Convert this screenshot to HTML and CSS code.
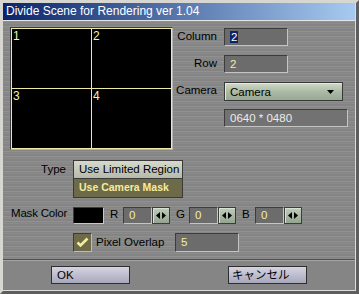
FILE: index.html
```html
<!DOCTYPE html>
<html lang="ja">
<head>
    <meta charset="UTF-8">
    <title>Divide Scene for Rendering</title>
    <link rel="stylesheet" href="styles.css">
</head>
<body>

<div class="window">
    <div class="window-inner">
        <div class="titlebar">Divide Scene for Rendering ver 1.04</div>

        <div class="panel">
            <div class="top">
                <div class="preview">
                    <div class="preview-grid">
                        <div class="cell">1</div>
                        <div class="cell">2</div>
                        <div class="cell">3</div>
                        <div class="cell">4</div>
                    </div>
                </div>

                <div class="fields">
                    <span class="label">Column</span>
                    <div class="field small"><span class="selected">2</span></div>

                    <span class="label">Row</span>
                    <div class="field small">2</div>

                    <span class="label">Camera</span>
                    <div class="dropdown">
                        <span>Camera</span>
                        <svg class="caret" width="7" height="4" viewBox="0 0 7 4"><polygon points="0,0 7,0 3.5,4" fill="#000"/></svg>
                    </div>

                    <div class="field info">0640 * 0480</div>
                </div>
            </div>

            <div class="row type-row">
                <span class="row-label">Type</span>
                <div class="choices">
                    <div class="choice">Use Limited Region</div>
                    <div class="choice active">Use Camera Mask</div>
                </div>
            </div>

            <div class="row mask-row">
                <span class="row-label left">Mask Color</span>
                <div class="swatch"></div>
                <div class="channel">
                    <span class="channel-name">R</span>
                    <div class="field tiny">0</div>
                    <div class="spin"><svg width="10" height="7" viewBox="0 0 10 7"><polygon points="4,0 4,7 0,3.5"/><polygon points="6,0 6,7 10,3.5"/></svg></div>
                </div>
                <div class="channel">
                    <span class="channel-name">G</span>
                    <div class="field tiny">0</div>
                    <div class="spin"><svg width="10" height="7" viewBox="0 0 10 7"><polygon points="4,0 4,7 0,3.5"/><polygon points="6,0 6,7 10,3.5"/></svg></div>
                </div>
                <div class="channel">
                    <span class="channel-name">B</span>
                    <div class="field tiny">0</div>
                    <div class="spin"><svg width="10" height="7" viewBox="0 0 10 7"><polygon points="4,0 4,7 0,3.5"/><polygon points="6,0 6,7 10,3.5"/></svg></div>
                </div>
            </div>

            <div class="row overlap-row">
                <div class="checkbox">
                    <svg width="13" height="11" viewBox="0 0 13 11"><polyline points="1.5,5.5 4.5,8.5 11.5,1.5" fill="none" stroke="#f4eca0" stroke-width="2.6"/></svg>
                </div>
                <span class="check-label">Pixel Overlap</span>
                <div class="field small">5</div>
            </div>
        </div>

        <div class="footer">
            <div class="button">OK</div>
            <div class="button cancel">キャンセル</div>
        </div>
    </div>
</div>

</body>
</html>
```

FILE: styles.css
```css
body {
    margin: 0;
    background: #d4d0c8;
    font-family: "Liberation Sans", "Noto Sans CJK JP", sans-serif;
    font-size: 11.5px;
    color: #000;
}

.window {
    width: 359px;
    height: 294px;
    box-sizing: border-box;
    border-top: 3px solid #d8d6d0;
    border-left: 3px solid #d8d6d0;
    border-right: 3px solid #5e5e5e;
    border-bottom: 3px solid #5e5e5e;
}

.window-inner {
    height: 100%;
    box-sizing: border-box;
    border-right: 1px solid #dcdcdc;
    border-bottom: 1px solid #dcdcdc;
    display: flex;
    flex-direction: column;
}

.titlebar {
    height: 17px;
    line-height: 17px;
    padding-left: 3px;
    font-size: 12px;
    color: #fff;
    background: linear-gradient(to right, #0a246a, #a6caf0);
    border-bottom: 1px solid #e4e4e4;
    white-space: nowrap;
}

.panel {
    height: 238px;
    box-sizing: border-box;
    padding: 6px 0 0 7px;
    background:
        repeating-linear-gradient(to bottom,
            rgba(255, 255, 255, 0.05) 0 1px,
            rgba(0, 0, 0, 0.04) 1px 2px,
            rgba(255, 255, 255, 0) 2px 3px,
            rgba(0, 0, 0, 0.05) 3px 5px),
        #8b8b8b;
    display: flex;
    flex-direction: column;
}

.top {
    display: flex;
    height: 123px;
}

/* preview of the split */

.preview {
    border: 1px solid;
    border-color: #3a3a3a #b4b4b4 #b4b4b4 #3a3a3a;
}

.preview-grid {
    display: grid;
    grid-template-columns: 79px 79px;
    grid-template-rows: 59px 59px;
    gap: 1px;
    padding: 1px;
    background: #eeeaa4;
}

.cell {
    background: #000;
    color: #f4f0b8;
    font-size: 12px;
    line-height: 12px;
    padding: 1px 0 0 1px;
}

/* right hand fields */

.fields {
    display: grid;
    grid-template-columns: 44px 124px;
    grid-auto-rows: 18px;
    column-gap: 7px;
    row-gap: 9px;
    margin-top: 1px;
    align-content: start;
}

.label {
    text-align: right;
    line-height: 17px;
    white-space: nowrap;
}

.field {
    box-sizing: border-box;
    height: 18px;
    line-height: 16px;
    padding-left: 5px;
    background: #6c6c6c;
    color: #f4eca0;
    border: 1px solid;
    border-color: #3c3c3c #c4c4c4 #c4c4c4 #3c3c3c;
}

.field.small {
    width: 64px;
}

.field.tiny {
    width: 29px;
}

.field.info {
    grid-column: 2;
    width: 124px;
    color: #ecece8;
    background: #727272;
}

.selected {
    background: #0a246a;
    color: #fff;
    padding: 0 1px;
}

.dropdown {
    box-sizing: border-box;
    width: 119px;
    height: 19px;
    padding: 0 8px 0 5px;
    border: 1px solid #383838;
    background: linear-gradient(to bottom, #d0dac8, #a8b8a2 55%, #98a894);
    box-shadow: inset 1px 1px 0 #e4ece0;
    display: flex;
    align-items: center;
    justify-content: space-between;
}

/* lower rows */

.row {
    display: flex;
    align-items: center;
}

.row-label {
    width: 56px;
    margin-right: 7px;
    text-align: right;
    white-space: nowrap;
}

.row-label.left {
    text-align: left;
    padding-left: 1px;
    box-sizing: border-box;
    align-self: flex-start;
    line-height: 12px;
    letter-spacing: -0.2px;
}

.type-row {
    margin-top: 10px;
    height: 38px;
    align-items: flex-start;
}

.type-row .row-label {
    line-height: 17px;
    margin-top: 1px;
}

.choices {
    display: flex;
    flex-direction: column;
    width: 110px;
}

.choice {
    box-sizing: border-box;
    height: 19px;
    line-height: 17px;
    padding-left: 5px;
    border: 1px solid #3a3a3a;
    background: linear-gradient(to bottom, #d6dacc, #b6baaa);
    white-space: nowrap;
}

.choice.active {
    border-top: 0;
    background: #6d6a49;
    color: #f4eca0;
    font-size: 10.5px;
    font-weight: bold;
}

.mask-row {
    margin-top: 9px;
    height: 17px;
    align-items: stretch;
}

.swatch {
    width: 31px;
    box-sizing: border-box;
    background: #000;
    border: 1px solid;
    border-color: #3c3c3c #c8c8c8 #c8c8c8 #3c3c3c;
    margin-right: 5px;
}

.channel {
    display: flex;
    align-items: stretch;
    margin-right: 5px;
}

.channel-name {
    width: 14px;
    padding-left: 1px;
    box-sizing: border-box;
    line-height: 15px;
}

.channel .field {
    height: 17px;
    line-height: 15px;
}

.spin {
    width: 18px;
    box-sizing: border-box;
    border: 1px solid #3c3c3c;
    background: linear-gradient(to bottom, #c0ccbc, #94a490);
    box-shadow: inset 1px 1px 0 #d8e2d4;
    display: flex;
    align-items: center;
    justify-content: center;
}

.overlap-row {
    margin-top: 9px;
    height: 19px;
    padding-left: 63px;
    align-items: stretch;
}

.checkbox {
    width: 19px;
    box-sizing: border-box;
    background: #6d6a49;
    border: 1px solid;
    border-color: #3c3c3c #bcbcbc #bcbcbc #3c3c3c;
    display: flex;
    align-items: center;
    justify-content: center;
}

.check-label {
    width: 79px;
    padding-left: 4px;
    line-height: 18px;
    white-space: nowrap;
}

.overlap-row .field {
    height: 19px;
    line-height: 17px;
}

/* footer buttons */

.footer {
    flex: 1;
    border-top: 1px solid #4e4e4e;
    box-shadow: inset 0 1px 0 #a4a4a4;
    background: #858585;
    padding: 6px 0 0 48px;
    display: flex;
    align-items: flex-start;
}

.button {
    box-sizing: border-box;
    width: 79px;
    height: 18px;
    line-height: 16px;
    padding-left: 5px;
    border: 1px solid #2e2e2e;
    background: linear-gradient(to bottom, #d4d4e2, #a8a8bc);
    white-space: nowrap;
}

.button.cancel {
    margin-left: 98px;
    padding-left: 3px;
}
```
